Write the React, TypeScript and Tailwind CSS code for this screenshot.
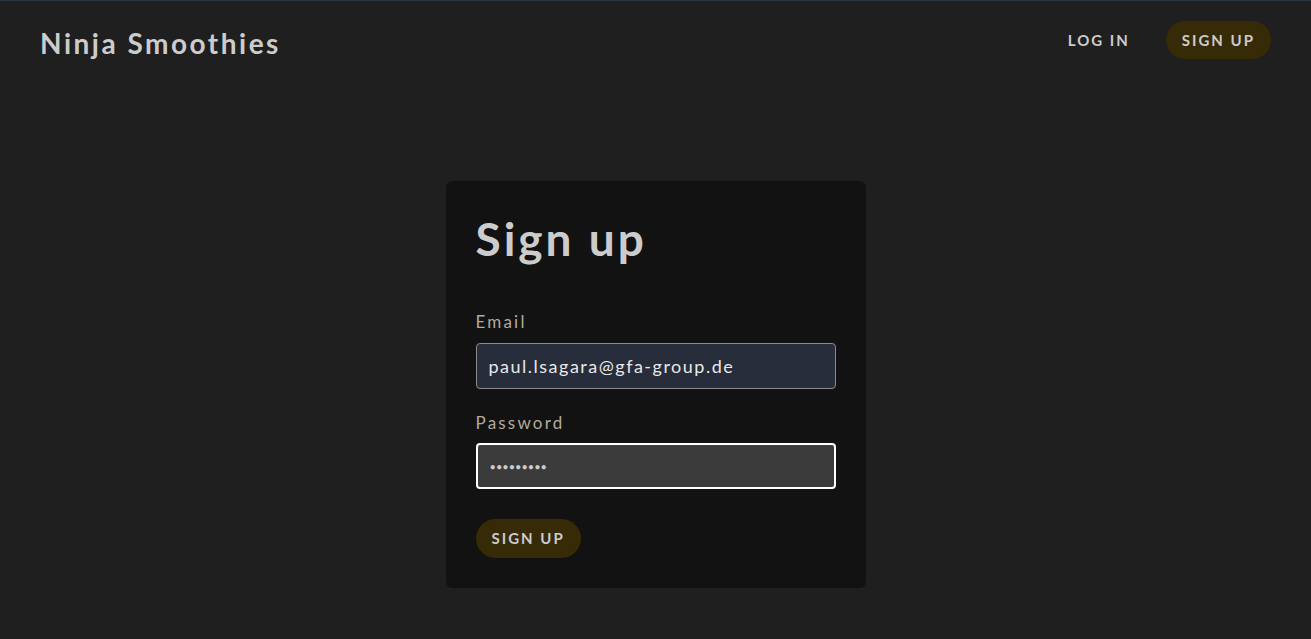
import React from "react";

export default function App() {
  return (
    <div
      className="min-h-[639px] w-full bg-[#1f1f1f] border-t border-[#2b3642] text-[#cccccc]"
      style={{ fontFamily: "Lato, 'Noto Sans', sans-serif" }}
    >
      <nav className="flex items-center justify-between pl-10 pr-10 h-[86px]">
        <h1 className="text-[28px] font-bold tracking-[2.5px] text-[#cccccc] -mt-0.5">
          Ninja Smoothies
        </h1>
        <ul className="flex items-center gap-9 -mt-2">
          <li>
            <a className="text-[15px] font-bold tracking-[2px] text-[#cccccc]">LOG IN</a>
          </li>
          <li>
            <a className="inline-flex items-center h-[38px] px-4 rounded-full bg-[#362b06] text-[15px] font-bold tracking-[2px] text-[#cccccc]">
              SIGN UP
            </a>
          </li>
        </ul>
      </nav>

      <div className="flex justify-center pt-[94px] pb-12">
        <form className="w-[420px] rounded-md bg-[#121212] px-[30px] pt-[30px] pb-[30px]">
          <h2 className="text-[46px] font-bold leading-[1.2] text-[#cccccc] tracking-[3px]">Sign up</h2>

          <label className="block mt-[43px] text-[17px] tracking-[2.2px] text-[#b3aa9e]">Email</label>
          <input
            type="text"
            defaultValue="paul.lsagara@gfa-group.de"
            className="block mt-2 w-full h-[46px] px-3 rounded-[4px] bg-[#272d3a] border border-[#8a8a8a] text-[18px] tracking-[1.5px] text-[#e8e8e8] outline-none"
          />

          <label className="block mt-[21px] text-[17px] tracking-[2.2px] text-[#b3aa9e]">Password</label>
          <input
            type="password"
            defaultValue="123456789"
            className="block mt-2 w-full h-[46px] px-3 rounded-[4px] bg-[#3b3b3b] border-2 border-white text-[11px] text-[#cccccc] outline-none"
          />

          <button
            type="button"
            className="mt-[30px] inline-flex items-center h-[39px] px-4 rounded-full bg-[#362b06] text-[15px] font-bold tracking-[2px] text-[#cccccc]"
          >
            SIGN UP
          </button>
        </form>
      </div>
    </div>
  );
}
